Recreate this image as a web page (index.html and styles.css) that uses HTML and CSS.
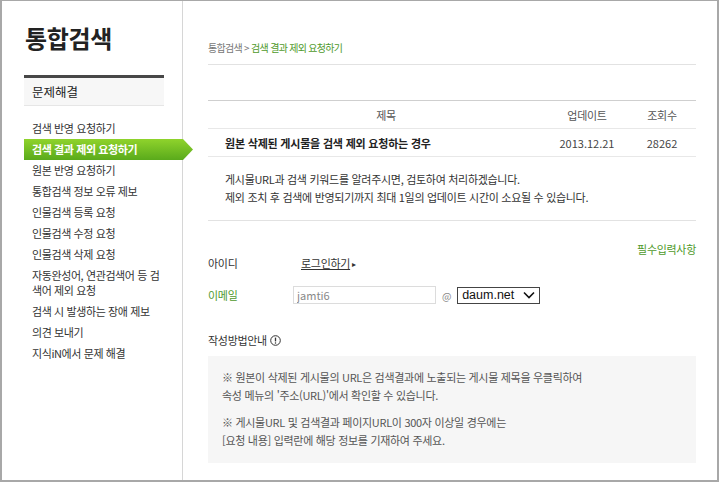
FILE: index.html
```html
<!DOCTYPE html>
<html lang="ko">
<head>
    <meta charset="UTF-8">
    <meta name="viewport" content="width=device-width, initial-scale=1.0">
    <title>통합검색 - 검색 결과 제외 요청하기</title>
    <link rel="stylesheet" href="styles.css">
</head>
<body>
    <div id="frame">
        <div id="sidebar">
            <h1 class="side-title">통합검색</h1>
            <div class="side-section">문제해결</div>
            <ul class="side-menu">
                <li>검색 반영 요청하기</li>
                <li class="active">검색 결과 제외 요청하기</li>
                <li>원본 반영 요청하기</li>
                <li>통합검색 정보 오류 제보</li>
                <li>인물검색 등록 요청</li>
                <li>인물검색 수정 요청</li>
                <li>인물검색 삭제 요청</li>
                <li>자동완성어, 연관검색어 등 검색어 제외 요청</li>
                <li>검색 시 발생하는 장애 제보</li>
                <li>의견 보내기</li>
                <li>지식iN에서 문제 해결</li>
            </ul>
        </div>

        <div id="main">
            <div class="breadcrumb">통합검색 &gt; <span class="current">검색 결과 제외 요청하기</span></div>

            <div class="board">
                <div class="board-head">
                    <div class="col-title">제목</div>
                    <div class="col-date">업데이트</div>
                    <div class="col-hits">조회수</div>
                </div>
                <div class="board-row">
                    <div class="col-title">원본 삭제된 게시물을 검색 제외 요청하는 경우</div>
                    <div class="col-date">2013.12.21</div>
                    <div class="col-hits">28262</div>
                </div>
                <div class="board-desc">
                    <p>게시물URL과 검색 키워드를 알려주시면, 검토하여 처리하겠습니다.</p>
                    <p>제외 조치 후 검색에 반영되기까지 최대 1일의 업데이트 시간이 소요될 수 있습니다.</p>
                </div>
            </div>

            <div class="required">필수입력사항</div>
            <div class="form-row">
                <div class="form-label">아이디</div>
                <div class="form-value"><a class="login-link">로그인하기</a><span class="arrow">&#9656;</span></div>
            </div>
            <div class="form-row email-row">
                <div class="form-label green">이메일</div>
                <div class="form-value">
                    <input class="email-id" type="text" value="jamti6">
                    <span class="at">@</span>
                    <div class="domain-select">
                        <span>daum.net</span>
                        <svg width="12" height="8" viewBox="0 0 12 8"><path d="M1 1.5 L6 6.5 L11 1.5" fill="none" stroke="#111" stroke-width="1.6"/></svg>
                    </div>
                </div>
            </div>

            <div class="guide-title">작성방법안내
                <svg class="info-icon" width="11" height="11" viewBox="0 0 11 11"><circle cx="5.5" cy="5.5" r="4.8" fill="none" stroke="#333" stroke-width="1"/><path d="M5.5 2.6 V6.4" stroke="#333" stroke-width="1.3"/><circle cx="5.5" cy="8.1" r="0.75" fill="#333"/></svg>
            </div>
            <div class="guide-box">
                <p>※ 원본이 삭제된 게시물의 URL은 검색결과에 노출되는 게시물 제목을 우클릭하여<br>속성 메뉴의 '주소(URL)'에서 확인할 수 있습니다.</p>
                <p>※ 게시물URL 및 검색결과 페이지URL이 300자 이상일 경우에는<br>[요청 내용] 입력란에 해당 정보를 기재하여 주세요.</p>
            </div>
        </div>
    </div>
</body>
</html>
```

FILE: styles.css
```css
* {
    box-sizing: border-box;
}
body {
    margin: 0;
    font-family: "Noto Sans CJK KR", "Noto Sans", sans-serif;
    color: #333;
    background: #fff;
}
#frame {
    width: 719px;
    height: 482px;
    border: 2px solid #a8a8a8;
    border-top-width: 1px;
    display: flex;
    overflow: hidden;
}

/* sidebar */
#sidebar {
    width: 181px;
    flex-shrink: 0;
    border-right: 1px solid #d6d6d6;
    padding: 23px 0 0 22px;
}
.side-title {
    margin: 0 0 23px 1px;
    font-size: 24px;
    line-height: 28px;
    font-weight: bold;
    color: #222;
    letter-spacing: -0.3px;
}
.side-section {
    width: 140px;
    height: 31px;
    border-top: 3px solid #474747;
    border-bottom: 1px solid #e6e6e6;
    background: #f7f7f7;
    padding-left: 8px;
    font-size: 12.5px;
    line-height: 28px;
    color: #222;
}
.side-menu {
    list-style: none;
    margin: 12px 0 0;
    padding: 0;
    width: 141px;
}
.side-menu li {
    padding: 3px 0 3px 8px;
    font-size: 11px;
    line-height: 15px;
    letter-spacing: -0.4px;
    color: #333;
}
.side-menu li.active {
    margin-right: -28px;
    color: #fff;
    font-weight: bold;
    background: linear-gradient(#8fd32c, #5aaa1b);
    clip-path: polygon(0 0, calc(100% - 10px) 0, 100% 50%, calc(100% - 10px) 100%, 0 100%);
}

/* main */
#main {
    width: 514px;
    padding: 40px 0 0 25px;
    font-size: 11px;
    letter-spacing: -0.3px;
}
.breadcrumb {
    font-size: 10px;
    line-height: 14px;
    color: #777;
    padding-bottom: 9px;
    border-bottom: 1px solid #e2e2e2;
    width: 488px;
    letter-spacing: -0.7px;
}
.breadcrumb .current {
    color: #4f9a2c;
}
.board {
    width: 488px;
    margin-top: 35px;
    border-top: 1px solid #cfcfcf;
}
.board-head,
.board-row {
    display: grid;
    grid-template-columns: 1fr 82px 68px;
    align-items: center;
    height: 28px;
    border-bottom: 1px solid #e8e8e8;
}
.board-head {
    color: #555;
}
.board-head .col-title {
    text-align: center;
    padding-left: 18px;
}
.col-date,
.col-hits {
    text-align: center;
}
.board-row .col-title {
    padding-left: 17px;
    font-weight: bold;
    color: #222;
    letter-spacing: -0.2px;
}
.board-row .col-date,
.board-row .col-hits {
    color: #444;
    letter-spacing: 0;
}
.board-desc {
    padding: 13px 0 14px 17px;
    border-bottom: 1px solid #e2e2e2;
    line-height: 18px;
}
.board-desc p {
    margin: 0;
}

/* form */
.required {
    width: 488px;
    margin-top: 21px;
    text-align: right;
    color: #4f9a2c;
    line-height: 14px;
}
.form-row {
    display: flex;
    align-items: center;
    height: 14px;
}
.form-row.email-row {
    height: 20px;
    margin-top: 15px;
}
.form-label {
    width: 85px;
    color: #333;
}
.form-label.green {
    color: #4f9a2c;
}
.form-value {
    display: flex;
    align-items: center;
}
.login-link {
    margin-left: 8px;
    color: #333;
    text-decoration: underline;
}
.arrow {
    font-size: 8px;
    margin-left: 2px;
    color: #333;
}
.email-id {
    width: 143px;
    height: 18px;
    border: 1px solid #dcdcdc;
    padding: 0 3px;
    font-family: inherit;
    font-size: 11px;
    color: #888;
    letter-spacing: 0;
    outline: none;
}
.at {
    margin: 0 6px 0 6px;
    font-size: 10px;
    color: #888;
}
.domain-select {
    width: 83px;
    height: 17px;
    border: 1px solid #444;
    display: flex;
    align-items: center;
    justify-content: space-between;
    padding: 0 4px;
    font-size: 12.5px;
    letter-spacing: 0;
    color: #111;
    font-family: "Liberation Sans", sans-serif;
}
.guide-title {
    margin-top: 28px;
    line-height: 14px;
    color: #333;
    display: flex;
    align-items: center;
    gap: 3px;
}
.guide-box {
    width: 488px;
    margin-top: 9px;
    background: #f6f6f6;
    padding: 12px 0 14px 14px;
    line-height: 18px;
    color: #555;
}
.guide-box p {
    margin: 0 0 9px;
}
.guide-box p:last-child {
    margin-bottom: 0;
}
```
